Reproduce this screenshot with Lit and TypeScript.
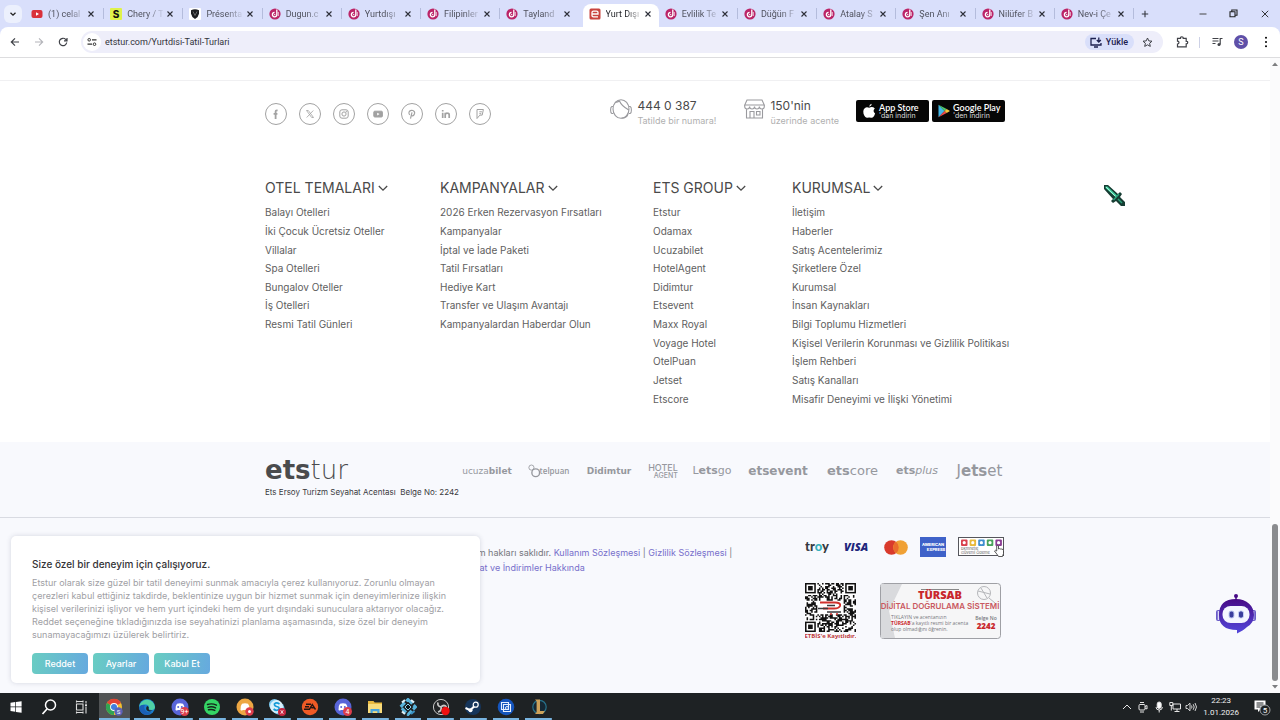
import { LitElement, html, svg, css } from "lit";
import { customElement } from "lit/decorators.js";
import { classMap } from "lit/directives/class-map.js";

type Tab = { title: string; icon: string; active?: boolean };

const TABS: Tab[] = [
  { title: "(1) celal", icon: "youtube" },
  { title: "Chery / T", icon: "s" },
  { title: "Présenta", icon: "shield" },
  { title: "Dugun.c", icon: "d" },
  { title: "Yurtdışı", icon: "d" },
  { title: "Filipinler", icon: "d" },
  { title: "Tayland", icon: "d" },
  { title: "Yurt Dışı", icon: "ets", active: true },
  { title: "Evlilik Te", icon: "d" },
  { title: "Düğün F", icon: "d" },
  { title: "Atalay S", icon: "d" },
  { title: "Şen Anı", icon: "d" },
  { title: "Nilüfer B", icon: "d" },
  { title: "Nev-i Çe", icon: "d" },
];

const COLUMNS = [
  {
    title: "OTEL TEMALARI",
    links: ["Balayı Otelleri", "İki Çocuk Ücretsiz Oteller", "Villalar", "Spa Otelleri", "Bungalov Oteller", "İş Otelleri", "Resmi Tatil Günleri"],
  },
  {
    title: "KAMPANYALAR",
    links: ["2026 Erken Rezervasyon Fırsatları", "Kampanyalar", "İptal ve İade Paketi", "Tatil Fırsatları", "Hediye Kart", "Transfer ve Ulaşım Avantajı", "Kampanyalardan Haberdar Olun"],
  },
  {
    title: "ETS GROUP",
    links: ["Etstur", "Odamax", "Ucuzabilet", "HotelAgent", "Didimtur", "Etsevent", "Maxx Royal", "Voyage Hotel", "OtelPuan", "Jetset", "Etscore"],
  },
  {
    title: "KURUMSAL",
    links: ["İletişim", "Haberler", "Satış Acentelerimiz", "Şirketlere Özel", "Kurumsal", "İnsan Kaynakları", "Bilgi Toplumu Hizmetleri", "Kişisel Verilerin Korunması ve Gizlilik Politikası", "İşlem Rehberi", "Satış Kanalları", "Misafir Deneyimi ve İlişki Yönetimi"],
  },
];

const favicon = (kind: string) => {
  switch (kind) {
    case "youtube":
      return html`<svg class="fav" viewBox="0 0 12 12"><rect x="0.500" y="2" width="11" height="8" rx="2" fill="#d9303a" /><path d="M5 4.200v3.600L8 6z" fill="#fff" /></svg>`;
    case "s":
      return html`<svg class="fav" viewBox="0 0 12 12"><rect width="12" height="12" rx="1" fill="#dff24a" /><text x="6" y="9.500" text-anchor="middle" font-family="Inter, sans-serif" font-weight="800" font-size="10" fill="#111">S</text></svg>`;
    case "shield":
      return html`<svg class="fav" viewBox="0 0 12 12"><rect width="12" height="12" rx="1" fill="#fff" /><path d="M2 2.200q4-2 8 0v3.600Q9.500 9 6 11 2.500 9 2 5.800z" fill="#1c1d20" /><path d="M4 3.500l2 4 2-4" stroke="#777" stroke-width=".8" fill="none" /></svg>`;
    case "ets":
      return html`<svg class="fav" viewBox="0 0 12 12"><rect x=".5" y=".5" width="11" height="11" rx="1.500" fill="#c9443f" /><path d="M9 8.800H4.500Q3 8.800 3 7.500v-3Q3 3.200 4.500 3.200h3Q9 3.200 9 4.500V6H3.500" fill="none" stroke="#fff" stroke-width="1.300" /></svg>`;
    default:
      return html`<svg class="fav" viewBox="0 0 12 12"><circle cx="6" cy="6" r="5.600" fill="#bb2568" /><path d="M7.800 1.500v5.200A2.200 2.200 0 1 1 5.600 4.400" fill="none" stroke="#fff" stroke-width="1.300" /><circle cx="5.700" cy="6.600" r=".7" fill="#fff" /><path d="M9.200 4v4" stroke="#fff" stroke-width=".8" /></svg>`;
  }
};

const SOCIAL: { name: string; glyph: unknown }[] = [
  { name: "Facebook", glyph: svg`<path d="M12.600 7.300h-.8q-1.200 0-1.200 1.300V16M8.600 10.800h3.800" stroke-width="1.800" />` },
  { name: "X", glyph: svg`<path d="M7.500 7.500h1.800l5.200 7h-1.800zM14.300 7.500l-6.600 7" stroke-width=".8" />` },
  { name: "Instagram", glyph: svg`<rect x="6.800" y="6.800" width="8.400" height="8.400" rx="2.200" /><circle cx="11" cy="11" r="2.100" /><circle cx="13.400" cy="8.700" r=".3" />` },
  { name: "YouTube", glyph: svg`<rect x="6.800" y="8.200" width="8.600" height="5.800" rx="1" fill="#a2a2a2" /><path d="M10.200 9.700v2.800l2.400-1.400z" fill="#fff" stroke="none" />` },
  { name: "Pinterest", glyph: svg`<path d="M8.600 12q-1.400-1.800-.3-3.500 1.300-1.500 3.600-1 2.300.9 1.600 3.200-.8 2.400-2.400 2.100-1-.3-1-1.100M11 9.300L9.500 15.600" stroke-width="1.200" />` },
  { name: "LinkedIn", glyph: svg`<path d="M7.700 9.700v5.300M7.700 7v1.500M10.200 15v-5.300M10.200 11.800q.2-1.700 2.100-1.600 1.900 0 1.900 1.800v3" stroke-width="1.700" />` },
  { name: "Foursquare", glyph: svg`<path d="M8 6.500h6.400l-1.200 5.600h-2.300L8 15.500zM10.300 8.800h2.600M10.300 10.700h2" stroke-width="1" />` },
];

const LOGOS: { name: string; width: number; mark: unknown }[] = [
  { name: "ucuzabilet", width: 50, mark: html`<span class="lg ucuz">ucuza<b>bilet</b></span>` },
  { name: "otelpuan", width: 41, mark: html`<span class="lg otel"><svg class="ring" viewBox="0 0 14 16"><circle cx="4" cy="4" r="3" /><circle cx="9" cy="10" r="4.500" stroke-width="1.600" /></svg>telpuan</span>` },
  { name: "didimtur", width: 48, mark: html`<span class="lg didim"><b>Didimtur</b></span>` },
  { name: "hotelagent", width: 28, mark: html`<span class="lg stack"><span>HOTEL</span><span class="sub">AGENT</span></span>` },
  { name: "letsgo", width: 38, mark: html`<span class="lg mid">L<b>ets</b>go</span>` },
  { name: "etsevent", width: 62, mark: html`<span class="lg big"><b>etsevent</b></span>` },
  { name: "etscore", width: 55, mark: html`<span class="lg large"><b>ets</b>core</span>` },
  { name: "etsplus", width: 42, mark: html`<span class="lg mid"><b>ets</b><i>plus</i></span>` },
  { name: "jetset", width: 51, mark: html`<span class="lg xl">J<b>ets</b>et</span>` },
];

/* QR symbol: three finder squares, data modules from a small linear generator. */
const QR_SIZE = 33;
const qrPath = (() => {
  let seed = 91;
  let d = "";
  const corner = (x: number, y: number) => (x < 8 && y < 8) || (x >= QR_SIZE - 8 && y < 8) || (x < 8 && y >= QR_SIZE - 8);
  for (let y = 0; y < QR_SIZE; y++) {
    for (let x = 0; x < QR_SIZE; x++) {
      seed = (seed * 1103515245 + 12345) % 2147483648;
      const middle = x > 7 && x < 25 && y > 11 && y < 21;
      if (!corner(x, y) && !middle && seed / 2147483648 > 0.46) d += `M${x} ${y}h1v1h-1z`;
    }
  }
  return d;
})();
const finder = (x: number, y: number) =>
  svg`<rect x=${x + 0.5} y=${y + 0.5} width="6" height="6" fill="none" stroke="#111" /><rect x=${x + 2} y=${y + 2} width="3" height="3" />`;

const discord = svg`<circle cx="9" cy="9" r="8.500" fill="#5865d8" /><path d="M4.500 12Q4 8 6 5.800q3-1 6 0Q14 8 13.500 12q-1.500 1-2.200 0h-4.600q-.7 1-2.200 0z" fill="#fff" /><circle cx="7.200" cy="9" r="1" fill="#5865d8" /><circle cx="10.800" cy="9" r="1" fill="#5865d8" />`;
const badge = (t: string) =>
  svg`<circle cx="13.500" cy="13.500" r="4.500" fill="#dc3d4b" /><text x="13.500" y="16" text-anchor="middle" font-family="Roboto, sans-serif" font-size="7" fill="#fff">${t}</text>`;

const TASKS: { name: string; open?: boolean; active?: boolean; art: unknown }[] = [
  { name: "Başlat", art: svg`<path d="M3.500 4.800l4.800-.7v4.500H3.500zM9 4l5.600-.8v5.400H9zM3.500 9.300h4.800v4.500l-4.800-.7zM9 9.300h5.600v5.400L9 13.900z" fill="#fff" />` },
  { name: "Ara", art: svg`<circle cx="10.500" cy="7" r="5" fill="none" stroke="#fff" stroke-width="1.500" /><path d="M7 11l-4.500 5" stroke="#fff" stroke-width="1.700" />` },
  { name: "Görev görünümü", art: svg`<path d="M3.500 6h6.500v6H3.500zM3 3.500h7.500M3 14.500h7.500M13 3v2.500M13 9v6.500M3.500 2.500v2M3.500 13.500v2M10 2.500v2M10 13.500v2" fill="none" stroke="#ddd" stroke-width="1.100" /><rect x="12" y="6.300" width="2" height="2" fill="#ddd" />` },
  { name: "Chrome", open: true, active: true, art: svg`<circle cx="9" cy="9" r="8" fill="#f2c12e" /><path d="M9 9L2 5A8 8 0 0 1 16 5z" fill="#e04436" /><path d="M9 9L2 5a8 8 0 0 0 7 12z" fill="#2fa454" /><circle cx="9" cy="9" r="3.900" fill="#fff" /><circle cx="9" cy="9" r="3" fill="#3f7de0" /><circle cx="13.500" cy="13.500" r="4.200" fill="#5a63b8" /><text x="13.500" y="16" text-anchor="middle" font-family="Roboto, sans-serif" font-size="6" fill="#fff">S</text>` },
  { name: "Edge", open: true, art: svg`<circle cx="9" cy="9" r="8" fill="#1a7fd0" /><path d="M1.500 7A8 8 0 0 1 17 9q0 3-3.500 3Q10 12 11 9.500 11 7 8 6.500 4 6 1.500 9z" fill="#4fd0a5" /><path d="M1.200 9Q3 6 7 7 5 10 8 13q2 2 6 1-3 3.500-7 2.800Q1.500 15 1.200 9z" fill="#1c5fb5" /><path d="M9 8q2.500 1 1.500 3 .5 2 4 1.500-4 2-6-.5Q7.500 10 9 8z" fill="#202426" />` },
  { name: "Discord", open: true, art: svg`${discord}${badge("9+")}` },
  { name: "Spotify", open: true, art: svg`<circle cx="9" cy="9" r="8" fill="#35d565" /><path d="M4.500 6.500q4.500-1.500 9 .7M5 9.300q4-1.200 7.600.6M5.500 11.800q3.500-.9 6.300.6" fill="none" stroke="#14251a" stroke-width="1.400" stroke-linecap="round" />` },
  { name: "Discord Canary", open: true, art: svg`<circle cx="9" cy="9" r="8.500" fill="#eda743" /><path d="M4.500 12Q4 8 6 5.800q3-1 6 0Q14 8 13.500 12q-1.500 1-2.200 0h-4.600q-.7 1-2.200 0z" fill="#fff" /><circle cx="13.500" cy="13.500" r="4.200" fill="#dc3d4b" /><circle cx="13.500" cy="13.500" r="1.500" fill="#fff" />` },
  { name: "Skype", open: true, art: svg`<circle cx="6.500" cy="6.500" r="5.500" fill="#7cc8ee" /><circle cx="10.500" cy="10.500" r="6" fill="#7cc8ee" /><circle cx="8.500" cy="8.500" r="6.500" fill="#d9f1fb" /><path d="M11.500 6Q8.500 4 6.500 5.800 6 8 8.600 8.500 11.600 9 11 11.200 8.500 13.500 5.600 11" fill="none" stroke="#159bd8" stroke-width="1.700" /><circle cx="14" cy="14" r="4" fill="#c62540" /><path d="M12.700 12.200l2.600 3.600M15.300 12.200l-2.600 3.600" stroke="#fff" stroke-width=".8" />` },
  { name: "EA", open: true, art: svg`<circle cx="9" cy="9" r="8.200" fill="#ee5a25" /><path d="M5 6.300h5M4 8.700h4M3 11.200h5.500L11.300 6.500 14.500 11.500M10.300 9.700h3" fill="none" stroke="#241512" stroke-width="1.400" />` },
  { name: "Discord PTB", open: true, art: svg`${discord}${badge("4")}` },
  { name: "Dosya Gezgini", open: true, art: svg`<path d="M2 3h5.500l1.200 1.500H16V15H2z" fill="#e9b93f" /><path d="M2 6h14v9H2z" fill="#f9dc7c" /><path d="M4.500 15v-4h9v4h-2.200v-1.700H6.700V15z" fill="#48a4dd" />` },
  { name: "Hex", open: true, art: svg`<path d="M9 1.500L16.500 9 9 16.500 1.500 9z" fill="none" stroke="#58b4dc" stroke-width="3" stroke-dasharray="6 2" /><path d="M3 4.500l3-2.500M12 2l3 2.500M3 13.500l3 2.500" stroke="#dff1f8" stroke-width="2.200" /><path d="M12 16l3.500-3" stroke="#3a8fc0" stroke-width="2.200" /><path d="M9 6l3 3-3 3-3-3z" fill="#0d1418" stroke="#8ad0ea" />` },
  { name: "OBS", open: true, art: svg`<circle cx="9" cy="9" r="7.600" fill="#232527" stroke="#c7c7c7" /><path d="M9 9q-4-1-3-4.500M9 9q3-3 5.500 0M9 9q1 4-3 5" stroke="#c7c7c7" stroke-width="1.800" fill="none" /><circle cx="13.500" cy="13" r="4.200" fill="#ef1111" />` },
  { name: "Steam", open: true, art: svg`<circle cx="9" cy="9" r="8" fill="#16355a" /><path d="M1.500 10l4.800 2.200L9.500 9l2-2" stroke="#fff" stroke-width="2" fill="none" /><circle cx="11.700" cy="6.700" r="2.500" fill="#16355a" stroke="#fff" stroke-width="1.200" /><circle cx="6.500" cy="12.200" r="2" fill="#fff" />` },
  { name: "Ekran", open: true, art: svg`<circle cx="9" cy="9" r="8.300" fill="#1555bd" /><path d="M4.500 4.500h7v7h-7zM6.500 6.500h7v7h-7z" fill="none" stroke="#e6efff" stroke-width="1.100" /><circle cx="10" cy="10" r="1.500" fill="none" stroke="#e6efff" />` },
  { name: "League of Legends", open: true, art: svg`<circle cx="9.500" cy="9" r="6.700" fill="#152733" stroke="#27728b" stroke-width="1.200" /><path d="M5 1.500h5v11.500h4.800l-1.800 3H5l1.600-1.800V3.300z" fill="#cda25a" />` },
];

const chevron = html`<svg class="chev" viewBox="0 0 10 10" aria-hidden="true"><path d="M.8 3l4.200 4.200L9.200 3" fill="none" stroke="#4a4a4a" stroke-width="1.300" /></svg>`;

@customElement("browser-bar")
class BrowserBar extends LitElement {
  static styles = css`
    :host { display: block; background: #d9dffb; font: 9px/12px Roboto, "Noto Sans", sans-serif; color: #50525e; }
    button { border: 0; padding: 0; margin: 0; background: none; color: inherit; font: inherit; display: grid; place-items: center; }
    svg { display: block; }
    .strip { display: flex; align-items: center; height: 27px; }
    .search { width: 18px; height: 18px; margin: 0 3px 0 4px; border-radius: 6px; background: #ecf0fd; flex: none; }
    .tabs { display: grid; grid-template-columns: repeat(14, minmax(0, 1fr)); flex: 0 1 1109px; min-width: 0; align-self: stretch; }
    .tab { display: flex; align-items: center; position: relative; padding: 0 8px 0 6px; }
    .tab::after { content: ""; position: absolute; right: 0; top: 8px; width: 1px; height: 11px; background: #b4bcdc; }
    .tab.active::after, .tab.before::after { display: none; }
    .tab.active { background: #fff; border-radius: 8px 8px 0 0; margin: 4px 0 0 3px; padding: 0 6px 4px 6px; color: #26272c; }
    .fav { width: 12px; height: 12px; flex: none; }
    .label { flex: 1; min-width: 0; margin: 0 2px 0 5px; white-space: nowrap; mask-image: linear-gradient(90deg, #000 20px, transparent 38px); -webkit-mask-image: linear-gradient(90deg, #000 20px, transparent 38px); }
    .close { width: 10px; height: 10px; flex: none; }
    .plus { width: 20px; height: 20px; margin-left: 1px; }
    .win { margin-left: auto; display: flex; }
    .win button { width: 31px; height: 27px; }
    .bar { display: flex; align-items: center; height: 30px; background: #fff; border-radius: 8px 8px 0 0; border-bottom: 1px solid #dddddf; padding: 0 4px 0 3px; }
    .nav { width: 24px; height: 24px; flex: none; }
    .omni { flex: 1; min-width: 0; display: flex; align-items: center; height: 22px; border-radius: 11px; background: #eeeefa; margin: 0 9px 0 6px; padding: 0 3px 0 2px; }
    .site { width: 18px; height: 18px; border-radius: 9px; background: #fff; flex: none; }
    .url { flex: 1; min-width: 0; border: 0; background: none; outline: 0; padding: 0 4px; font: inherit; color: #33343b; }
    .install { display: flex; align-items: center; gap: 4px; height: 16px; padding: 0 6px 0 5px; border-radius: 8px; background: #d9dffa; color: #1d2150; font-weight: 500; }
    .star { width: 26px; height: 18px; }
    .tool { width: 20px; height: 20px; flex: none; }
    .rule { width: 1px; height: 11px; background: #cdd1e6; margin: 0 7px; }
    .who { width: 14px; height: 14px; border-radius: 7px; background: #5f50a8; color: #fff; margin: 0 8px 0 7px; }
  `;

  render() {
    return html`
      <div class="strip">
        <button class="search" aria-label="Sekme ara"><svg width="8" height="8" viewBox="0 0 8 8"><path d="M1.500 2.800L4 5.200l2.500-2.400" fill="none" stroke="#222" stroke-width="1.300" /></svg></button>
        <div class="tabs">
          ${TABS.map(
            (t, i) => html`<div class=${classMap({ tab: true, active: !!t.active, before: !!TABS[i + 1]?.active })}>
              ${favicon(t.icon)}<span class="label">${t.title}</span>
              <button class="close" aria-label="Sekmeyi kapat"><svg width="8" height="8" viewBox="0 0 8 8"><path d="M1.500 1.500l5 5M6.500 1.500l-5 5" stroke="#2c2e38" stroke-width="1.100" /></svg></button>
            </div>`
          )}
        </div>
        <button class="plus" aria-label="Yeni sekme"><svg width="8" height="8" viewBox="0 0 8 8"><path d="M4 .8v6.400M.8 4h6.400" stroke="#33363f" stroke-width="1.100" /></svg></button>
        <div class="win">
          <button aria-label="Küçült"><svg width="8" height="8" viewBox="0 0 8 8"><path d="M.5 4h7" stroke="#444" /></svg></button>
          <button aria-label="Geri yükle"><svg width="9" height="9" viewBox="0 0 9 9"><path d="M1 2.800h5v5H1zM2.800 2.500V1H8v5.200H6.300" fill="none" stroke="#222" stroke-width="1.100" /></svg></button>
          <button aria-label="Kapat"><svg width="8" height="8" viewBox="0 0 8 8"><path d="M.8.8l6.400 6.400M7.200.8L.8 7.200" stroke="#222" stroke-width=".9" /></svg></button>
        </div>
      </div>
      <div class="bar">
        <button class="nav" aria-label="Geri"><svg width="10" height="10" viewBox="0 0 10 10"><path d="M9 5H1.500M5 1.300L1.300 5 5 8.700" fill="none" stroke="#3f4147" stroke-width="1.200" /></svg></button>
        <button class="nav" aria-label="İleri"><svg width="10" height="10" viewBox="0 0 10 10"><path d="M1 5h7.500M5 1.300L8.700 5 5 8.700" fill="none" stroke="#b3b4b9" stroke-width="1.100" /></svg></button>
        <button class="nav" aria-label="Yenile"><svg width="10" height="10" viewBox="0 0 10 10"><path d="M8.700 5.500A3.700 3.700 0 1 1 7.700 2.400L8.800 3.600M9 1v2.900H6" fill="none" stroke="#3f4147" stroke-width="1.200" /></svg></button>
        <div class="omni">
          <button class="site" aria-label="Site bilgileri"><svg width="10" height="10" viewBox="0 0 10 10"><circle cx="2.200" cy="2.800" r="1.300" fill="none" stroke="#333" /><circle cx="7.500" cy="7.200" r="1.300" fill="none" stroke="#333" /><path d="M5 2.800h4.500M.5 7.200H5" stroke="#333" stroke-width="1.200" /></svg></button>
          <input class="url" aria-label="Adres" .value=${"etstur.com/Yurtdisi-Tatil-Turlari"} />
          <button class="install"><svg width="12" height="11" viewBox="0 0 12 11"><path d="M6 1.500H1v6.500h10V6M4 10h4M8.800.5v4M6.800 3l2 2 2-2" fill="none" stroke="#1d2150" stroke-width="1.300" /></svg>Yükle</button>
          <button class="star" aria-label="Yer işareti"><svg width="11" height="11" viewBox="0 0 11 11"><path d="M5.500 1l1.300 2.900 3.200.3-2.400 2.100.7 3.100-2.800-1.600-2.800 1.600.7-3.100L1 4.200l3.200-.3z" fill="none" stroke="#3f4147" /></svg></button>
        </div>
        <button class="tool" aria-label="Uzantılar"><svg width="13" height="12" viewBox="0 0 13 12"><path d="M1.500 2.300h3Q4.300.8 5.800.8T7.200 2.300h3v3q1.500-.2 1.500 1.200T10.200 7.800v3H1.500V8Q3 8 3 6.600T1.500 5.200z" fill="none" stroke="#3f4147" stroke-width="1.200" /></svg></button>
        <span class="rule"></span>
        <button class="tool" aria-label="Medya"><svg width="11" height="10" viewBox="0 0 11 10"><path d="M.5 1.500h6M.5 4h6M.5 6.500h3M8.200 7.500v-6h2.300" fill="none" stroke="#3f4147" stroke-width="1.200" /><circle cx="7" cy="7.500" r="1.500" fill="#3f4147" /></svg></button>
        <button class="who" aria-label="Profil">S</button>
        <button class="tool" aria-label="Menü"><svg width="4" height="12" viewBox="0 0 4 12"><circle cx="2" cy="1.800" r="1" /><circle cx="2" cy="6" r="1" /><circle cx="2" cy="10.200" r="1" /></svg></button>
      </div>`;
  }
}

@customElement("site-footer")
class SiteFooter extends LitElement {
  static styles = css`
    :host { display: flex; flex-direction: column; min-width: 0; height: 100%; background: #fff; font: 10px/12px Inter, sans-serif; color: #606060; }
    a { color: inherit; text-decoration: none; }
    svg { display: block; flex: none; }
    .wrap { width: 100%; max-width: 740px; margin: 0 auto; }
    .head { height: 22px; border-bottom: 1px solid #f0f0f2; flex: none; }
    .row { display: flex; align-items: center; height: 34px; padding: 15px 0 50px; }
    .social { display: flex; gap: 12px; padding-top: 2px; }
    .social svg { width: 22px; height: 22px; fill: none; stroke: #a2a2a2; }
    .contact { margin-left: auto; display: flex; align-items: flex-start; gap: 5px; }
    .contact + .contact { margin-left: 28px; }
    .contact strong { display: block; font-size: 12px; line-height: 15px; font-weight: 400; color: #4a4a4a; }
    .contact span { display: block; font-size: 9px; line-height: 15px; color: #b0b0b0; }
    .stores { display: flex; gap: 3px; margin-left: 17px; padding-bottom: 4px; }
    .store { display: flex; align-items: center; gap: 3px; width: 67px; height: 22px; padding-left: 6px; border-radius: 2px; background: #060606; color: #fff; white-space: nowrap; }
    .store b { display: block; font: 600 9px/9px Lato, sans-serif; }
    .store small { display: block; font-size: 7px; line-height: 8px; color: #ddd; }
    .links { display: grid; grid-template-columns: 175fr 213fr 139fr 213fr; padding-bottom: 34px; }
    h3 { display: flex; align-items: center; gap: 3px; margin: 0 0 7px; font-size: 14px; line-height: 16px; font-weight: 400; color: #4a4a4a; white-space: nowrap; }
    .chev { width: 10px; height: 10px; }
    section { min-width: 0; }
    ul { list-style: none; margin: 0; padding: 0; display: grid; grid-template-rows: repeat(11, 1fr); height: 205px; align-items: center; white-space: nowrap; }
    .brands { background: #f8f9fd; border-bottom: 1px solid #d9dbe2; padding: 16px 0 19px; }
    .line { display: flex; align-items: center; height: 24px; justify-content: space-between; }
    .ets { font: 26px/24px "DejaVu Sans", sans-serif; font-weight: 200; color: #4a4b4d; }
    .ets b { font-weight: 700; }
    .logos { display: flex; gap: 16px; align-items: center; color: #96989e; padding-top: 2px; }
    .logo { display: flex; justify-content: center; }
    .lg { font: 9px/12px "DejaVu Sans", sans-serif; white-space: nowrap; }
    .lg b { font-weight: 700; }
    .lg.mid { font-size: 11px; }
    .lg.big { font-size: 12px; }
    .lg.large { font-size: 13px; }
    .lg.xl { font-size: 15px; }
    .lg.otel { display: flex; align-items: center; font: 600 8px/12px "Open Sans", sans-serif; }
    .ring { width: 12px; height: 14px; fill: none; stroke: #96989e; }
    .lg.stack { display: flex; flex-direction: column; font: 500 9px/9px Inter, sans-serif; }
    .sub { font-size: 7px; line-height: 8px; align-self: flex-end; }
    .agency { margin: 4px 0 0; font-size: 8px; line-height: 12px; color: #3a3a3e; white-space: pre; }
    .base { flex: 1; background: #f8f9fd; }
    .legal { display: flex; justify-content: space-between; padding-top: 19px; }
    .copy { margin: 0; padding: 8px 0 0 202px; line-height: 15px; font-size: 9px; color: #77787e; white-space: nowrap; }
    .copy a { color: #776fcb; }
    .pay { display: flex; flex-direction: column; gap: 26px; width: 200px; }
    .cards { display: flex; align-items: center; justify-content: space-between; height: 20px; }
    .seals { display: flex; gap: 24px; align-items: flex-start; }
  `;

  render() {
    return html`
      <div class="head"></div>
      <div class="wrap">
        <div class="row">
          <div class="social">
            ${SOCIAL.map((s) => html`<a href="#" aria-label=${s.name}><svg viewBox="0 0 22 22"><circle cx="11" cy="11" r="10.500" />${s.glyph}</svg></a>`)}
          </div>
          <div class="contact">
            <svg width="22" height="24" viewBox="0 0 22 24" fill="none" stroke="#9a9a9e" stroke-width="1.100"><ellipse cx="11" cy="11" rx="8" ry="9.300" /><path d="M3 8.500H1.800Q.6 9 .6 12t1.200 3.500H3.200M19 8.500h1.200q1.200.5 1.200 3.500t-1.200 3.500h-1.400M5 4.500Q8 4 9.500 3q2 5 9.300 9M18 16q-1 4-6.500 4.300" /></svg>
            <div><strong>444 0 387</strong><span>Tatilde bir numara!</span></div>
          </div>
          <div class="contact">
            <svg width="21" height="24" viewBox="0 0 21 24" fill="none" stroke="#9a9a9e" stroke-width="1.100"><path d="M3 2h15l2.300 5H.7zM.7 7v1.500a2.450 2.450 0 0 0 4.900 0 2.450 2.450 0 0 0 4.900 0 2.450 2.450 0 0 0 4.900 0 2.450 2.450 0 0 0 4.900 0V7M.7 7h19.600M2.500 11v9h16v-9M6 20v-6.500h4V20M12.500 13.500h3.500v3.500h-3.500z" /></svg>
            <div><strong>150'nin</strong><span>üzerinde acente</span></div>
          </div>
          <div class="stores">
            <a class="store" href="#"><svg width="14" height="16" viewBox="0 0 14 16"><path d="M9.800.8Q9.800 3 7.200 3.800 7.300 1.400 9.800.8zM7.200 4.700Q10.500 3 12.800 5.500q-2.600 2.400.3 5Q11.500 15.300 9.200 14.800 7 14 5.300 14.800 3 15 1.500 10.700.6 5.800 3.800 4.400 5.500 4 7.200 4.700z" fill="#fff" /></svg><span><b>App Store</b><small>'dan indirin</small></span></a>
            <a class="store" href="#"><svg width="12" height="14" viewBox="0 0 12 14"><path d="M.5.8v12.400L6.500 7z" fill="#43b8e8" /><path d="M.5.8L6.500 7l2.200-2z" fill="#4fc66e" /><path d="M.5 13.200L6.500 7l2.200 2z" fill="#e94b4b" /><path d="M8.700 5L12 7 8.700 9 6.500 7z" fill="#f6c63c" /></svg><span><b>Google Play</b><small>'den indirin</small></span></a>
          </div>
        </div>
        <div class="links">
          ${COLUMNS.map((c) => html`<section><h3>${c.title}${chevron}</h3><ul>${c.links.map((l) => html`<li><a href="#">${l}</a></li>`)}</ul></section>`)}
        </div>
      </div>
      <div class="brands">
        <div class="wrap">
          <div class="line">
            <a class="ets" href="#"><b>ets</b>tur</a>
            <div class="logos">${LOGOS.map((l) => html`<a class="logo" href="#" aria-label=${l.name} style="width:${l.width}px">${l.mark}</a>`)}</div>
          </div>
          <p class="agency">Ets Ersoy Turizm Seyahat Acentası  Belge No: 2242</p>
        </div>
      </div>
      <div class="base">
        <div class="wrap legal">
          <p class="copy">Tüm hakları saklıdır. <a href="#">Kullanım Sözleşmesi</a> | <a href="#">Gizlilik Sözleşmesi</a> |<br /><a href="#">Fiyat ve İndirimler Hakkında</a></p>
          <div class="pay">
            <div class="cards">
              <svg width="27" height="20" viewBox="0 0 27 20"><text x="0" y="14" font-family="Lato, sans-serif" font-weight="900" font-size="13" fill="#36383d">tr<tspan fill="#36b0bd">o</tspan>y</text></svg>
              <svg width="27" height="20" viewBox="0 0 27 20"><text x="0" y="14" font-family="Open Sans, sans-serif" font-weight="800" font-style="italic" font-size="11" fill="#20267c">VISA</text></svg>
              <svg width="24" height="15" viewBox="0 0 24 15"><circle cx="7.500" cy="7.500" r="7.300" fill="#d93a2c" /><circle cx="16.500" cy="7.500" r="7.300" fill="#f0a135" /><path d="M12 1.800a7.300 7.300 0 0 1 0 11.400 7.300 7.300 0 0 1 0-11.400z" fill="#ea6c2c" /></svg>
              <svg width="26" height="20" viewBox="0 0 26 20"><rect width="26" height="20" fill="#3f62c9" /><text x="13" y="9" text-anchor="middle" font-family="Inter, sans-serif" font-weight="800" font-size="4" fill="#fff">AMERICAN</text><text x="16" y="14" text-anchor="middle" font-family="Inter, sans-serif" font-weight="800" font-size="4" fill="#fff">EXPRESS</text></svg>
              <svg width="47" height="20" viewBox="0 0 47 20"><rect x=".5" y=".5" width="45" height="18" fill="#fff" stroke="#55565c" />${["#d8414c", "#e8b93b", "#3f8fd0", "#49a35c", "#8b3d94"].map(
                (c, i) => svg`<rect x=${3 + i * 8.6} y="2.500" width="6.500" height="6.500" rx="1" fill=${c} /><circle cx=${6.2 + i * 8.6} cy="5.700" r="1.600" fill="#fff" />`
              )}<text x="3" y="13" font-family="Inter, sans-serif" font-size="4" fill="#666">bkmnetle</text><text x="3" y="17" font-family="Inter, sans-serif" font-size="4" fill="#666">Güvenli Ödeme</text><path d="M39.500 18l-3-4q.5-1.500 2.200 0V9q1-1.200 1.800 0v3q1-.8 1.800 0 1-.5 1.600.3 1.600-.4 1.600 1.200v3l-1 3h-4z" fill="#fff" stroke="#333" stroke-width=".8" /></svg>
            </div>
            <div class="seals">
              <svg width="51" height="57" viewBox="0 0 51 57"><g transform="scale(1.545 1.485)" fill="#111"><rect width="33" height="33" fill="#fff" /><path d=${qrPath} />${finder(0, 0)}${finder(26, 0)}${finder(0, 26)}</g><path d="M15 19.500h15q6 0 5 3.500-1 2.500-6 2.500H18" fill="none" stroke="#d0302c" stroke-width="2" /><path d="M13 25.500h10M22 22.500h8M22 29h14" fill="none" stroke="#3a3a3e" stroke-width="1.600" /><circle cx="26" cy="31" r="1" fill="#d0302c" /><circle cx="32" cy="31" r="1" fill="#d0302c" /><text x="25.500" y="55" text-anchor="middle" font-family="Open Sans, sans-serif" font-weight="700" font-size="6" fill="#c03a3a">ETBİS'e Kayıtlıdır.</text></svg>
              <svg width="121" height="56" viewBox="0 0 121 56" font-family="Open Sans, sans-serif"><rect x=".5" y=".5" width="120" height="55" rx="3" fill="#f6f6f7" stroke="#9fa0a5" /><path d="M1 1h21L9 28 15 55H1z" fill="#d9dadd" /><path d="M41 6.500h38" stroke="#888" /><text x="60" y="16" text-anchor="middle" font-weight="800" font-size="11" fill="#c9262c">TÜRSAB</text><text x="60" y="26" text-anchor="middle" font-family="Inter, sans-serif" font-weight="600" font-size="8" fill="#c95860">DİJİTAL DOĞRULAMA SİSTEMİ</text><g font-size="5" fill="#77787d"><text x="11" y="36">TIKLAYIN ve acentanızın</text><text x="11" y="42"><tspan fill="#c9262c" font-weight="700">TÜRSAB</tspan>'a kayıtlı resmi bir acenta</text><text x="11" y="48">olup olmadığını öğrenin.</text><text x="106" y="37" text-anchor="middle" font-size="5" font-weight="600">Belge No</text></g><text x="106" y="46" text-anchor="middle" font-weight="800" font-size="8" fill="#c9262c">2242</text><g fill="none" stroke="#b5b6ba"><circle cx="104" cy="10" r="6.500" /><path d="M109 15l6 5M98 8l12 3M101 5l6 10" /></g></svg>
            </div>
          </div>
        </div>
      </div>`;
  }
}

@customElement("cookie-card")
class CookieCard extends LitElement {
  static styles = css`
    :host { display: block; box-sizing: border-box; padding: 22px 21px 9px; background: #fff; border-radius: 5px; box-shadow: 0 0 5px rgba(50, 55, 90, 0.18); font: 9px/13px Inter, sans-serif; color: #a0a0a4; }
    h2 { margin: 0 0 6px; font-size: 10px; line-height: 12px; font-weight: 500; color: #333336; }
    p { margin: 0 0 12px; white-space: nowrap; }
    .actions { display: flex; gap: 5px; }
    button { width: 56px; height: 21px; border: 0; border-radius: 4px; padding: 0; background: linear-gradient(100deg, #69cdc2, #66a9df); color: #fff; font: 500 9px/12px Inter, sans-serif; }
  `;

  render() {
    return html`
      <h2>Size özel bir deneyim için çalışıyoruz.</h2>
      <p>Etstur olarak size güzel bir tatil deneyimi sunmak amacıyla çerez kullanıyoruz. Zorunlu olmayan<br />
        çerezleri kabul ettiğiniz takdirde, beklentinize uygun bir hizmet sunmak için deneyimlerinize ilişkin<br />
        kişisel verilerinizi işliyor ve hem yurt içindeki hem de yurt dışındaki sunuculara aktarıyor olacağız.<br />
        Reddet seçeneğine tıkladığınızda ise seyahatinizi planlama aşamasında, size özel bir deneyim<br />
        sunamayacağımızı üzülerek belirtiriz.</p>
      <div class="actions"><button>Reddet</button><button>Ayarlar</button><button>Kabul Et</button></div>`;
  }
}

@customElement("task-bar")
class TaskBar extends LitElement {
  static styles = css`
    :host { display: flex; height: 27px; background: #1e2224; color: #f0f0f0; font: 9px/12px Roboto, "Noto Sans", sans-serif; }
    button { border: 0; padding: 0; background: none; color: inherit; font: inherit; display: grid; place-items: center; }
    svg { display: block; }
    .apps { display: grid; grid-template-columns: repeat(17, minmax(0, 1fr)); flex: 0 1 555px; }
    .app { border: solid transparent; border-width: 0 3px; background-clip: padding-box; }
    .app.open { background-image: linear-gradient(#78b4e0, #78b4e0); background-size: 100% 2px; background-position: bottom; background-repeat: no-repeat; }
    .app.active { background-color: #505355; border-width: 0 1px; }
    .tray { margin-left: auto; display: flex; align-items: center; gap: 4px; }
    .tray svg { width: 12px; height: 12px; fill: none; stroke: #e6e6e6; }
    .clock { text-align: center; font-size: 8px; line-height: 12px; margin: 0 8px 0 2px; }
    .note { width: 22px; height: 27px; margin-right: 7px; }
    .tray .note svg { width: 18px; height: 18px; }
  `;

  render() {
    return html`
      <div class="apps">
        ${TASKS.map((t) => html`<button class=${classMap({ app: true, open: !!t.open, active: !!t.active })} aria-label=${t.name}><svg width="18" height="18" viewBox="0 0 18 18">${t.art}</svg></button>`)}
      </div>
      <div class="tray">
        <svg viewBox="0 0 12 12"><path d="M2 8l4-4 4 4" /></svg>
        <svg viewBox="0 0 12 12"><rect x="2" y="3.500" width="6" height="5.500" rx="1" /><path d="M8 5.500l2-1v3.500l-2-1M3 1.500h4M3 11h4" /></svg>
        <svg viewBox="0 0 12 12"><rect x="4.200" y="1" width="4" height="6.500" rx="2" fill="#fff" /><path d="M3 6q0 3 3.200 3t3.200-3M6.200 9v2.500" /></svg>
        <svg viewBox="0 0 12 12"><path d="M4 3h7.500v5H4zM5.500 10.500h5M8 8v2.500M.8 1.500h3v3h-3zM2.300 4.500v5" /></svg>
        <svg viewBox="0 0 12 12"><path d="M1 4.500h1.500L5 2.200v7.600L2.500 7.500H1zM6.500 4.500q1 1.500 0 3M8.200 3.200q2 2.800 0 5.600M10 2q3 4 0 8" stroke-width=".9" /></svg>
        <div class="clock">22:23<br />1.01.2026</div>
        <button class="note" aria-label="Bildirimler"><svg viewBox="0 0 18 18"><path d="M1.500 2.500h11v9h-5l-2.500 2.500v-2.500H1.500z" fill="#fff" stroke="none" /><path d="M3.500 5h7M3.500 7h7M3.500 9h4" stroke="#1e2224" /><circle cx="12" cy="12" r="5" fill="#1e2224" stroke="#9da0a2" /><text x="12" y="15" text-anchor="middle" font-size="8" fill="#fff" stroke="none">5</text></svg></button>
      </div>`;
  }
}

@customElement("app-root")
class AppRoot extends LitElement {
  static styles = css`
    :host { display: flex; flex-direction: column; height: 100vh; overflow: hidden; }
    .view { flex: 1; min-height: 0; display: flex; position: relative; overflow: hidden; }
    site-footer { flex: 1; }
    .scroll { width: 10px; background: #fbfbfc; display: flex; flex-direction: column; align-items: center; justify-content: flex-end; gap: 3px; padding: 3px 0 4px; box-sizing: border-box; }
    .scroll .up { margin-bottom: auto; }
    .thumb { width: 6px; height: 25%; background: #8b8c8e; border-radius: 3px; }
    svg { display: block; flex: none; }
    cookie-card { position: absolute; left: 11px; bottom: 10px; width: 469px; }
    .bot { position: absolute; right: 23px; bottom: 58px; border: 0; padding: 0; background: none; }
    .pointer { position: absolute; left: 1103px; top: 126px; }
  `;

  render() {
    return html`
      <browser-bar></browser-bar>
      <div class="view">
        <site-footer></site-footer>
        <div class="scroll">
          <svg class="up" width="8" height="6" viewBox="0 0 8 6"><path d="M1 5l3-3.500L7 5z" fill="#7d7e80" /></svg>
          <div class="thumb"></div>
          <svg width="8" height="5" viewBox="0 0 8 5"><path d="M1 1l3 3.500L7 1z" fill="#7d7e80" /></svg>
        </div>
        <cookie-card></cookie-card>
        <button class="bot" aria-label="Asistan">
          <svg width="42" height="43" viewBox="0 0 42 43">
            <defs><linearGradient id="g" x1="0" y1="0" x2="0" y2="1"><stop offset="0" stop-color="#470a86" /><stop offset="1" stop-color="#5448dc" /></linearGradient></defs>
            <rect x="1" y="18" width="5" height="11" rx="2" fill="#6a5cc8" /><rect x="36" y="18" width="5" height="11" rx="2" fill="#6a5cc8" /><path d="M3.500 19v9M38.500 19v9" stroke="#dcd9f7" stroke-width="1.500" />
            <path d="M21 4v5" stroke="#470a86" stroke-width="1.500" /><circle cx="21" cy="4" r="2" fill="#470a86" />
            <path d="M21 7C32 7 39 14 39 23q0 8-7 12-3 3-10 6.500V38Q4 38 4 23 4 7 21 7z" fill="url(#g)" />
            <rect x="7.500" y="14" width="27" height="17" rx="8" fill="#f4f5ff" />
            <rect x="14" y="19" width="5" height="7" rx="2" fill="#3a3d9c" stroke="#c4cdf5" /><rect x="23.500" y="19" width="5" height="7" rx="2" fill="#3a3d9c" stroke="#c4cdf5" />
          </svg>
        </button>
        <svg class="pointer" width="23" height="23" viewBox="0 0 23 23"><path d="M1 1h4l10 9 2-2 2 2-2 3 5 5v4h-4l-5-5-3 2-2-2 2-2L1 5z" fill="#163d33" /><path d="M2.500 2.500h2l9.500 9-1.500 1.500-10-9z" fill="#3fd0a0" /><path d="M3 3l9.500 9.500" stroke="#a6f2d6" /><path d="M16 10l-5.500 6M15 15l4 4" stroke="#2aa37c" stroke-width="1.400" /></svg>
      </div>
      <task-bar></task-bar>`;
  }
}
